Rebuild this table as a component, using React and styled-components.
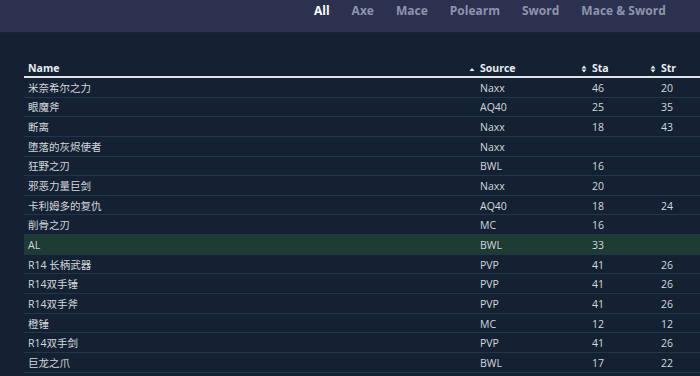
import React from "react";
import styled, { createGlobalStyle } from "styled-components";

const GlobalStyle = createGlobalStyle`
  html, body {
    margin: 0;
    padding: 0;
    background: #142132;
    font-family: "Open Sans", "Noto Sans", "Noto Sans CJK SC", sans-serif;
  }
`;

const tabs = ["All", "Axe", "Mace", "Polearm", "Sword", "Mace & Sword"];

const rows = [
  ["米奈希尔之力", "Naxx", "46", "20"],
  ["眼魔斧", "AQ40", "25", "35"],
  ["断离", "Naxx", "18", "43"],
  ["堕落的灰烬使者", "Naxx", "", ""],
  ["狂野之刃", "BWL", "16", ""],
  ["邪恶力量巨剑", "Naxx", "20", ""],
  ["卡利姆多的复仇", "AQ40", "18", "24"],
  ["削骨之刃", "MC", "16", ""],
  ["AL", "BWL", "33", "", true],
  ["R14 长柄武器", "PVP", "41", "26"],
  ["R14双手锤", "PVP", "41", "26"],
  ["R14双手斧", "PVP", "41", "26"],
  ["橙锤", "MC", "12", "12"],
  ["R14双手剑", "PVP", "41", "26"],
  ["巨龙之爪", "BWL", "17", "22"],
];

const Page = styled.div`
  width: 700px;
  height: 376px;
  overflow: hidden;
`;

const TopBar = styled.nav`
  height: 32px;
  background: #2c3150;
  border-bottom: 2px solid #1a2438;
  display: flex;
  align-items: flex-start;
  padding-left: 314px;
  gap: 22px;
`;

const Tab = styled.span`
  font-size: 12px;
  font-weight: 700;
  line-height: 22px;
  color: ${(p) => (p.active ? "#ffffff" : "#8f94ad")};
  white-space: nowrap;
`;

const Content = styled.div`
  padding: 26px 0 0 24px;
  overflow: hidden;
`;

const Table = styled.table`
  border-collapse: collapse;
  table-layout: fixed;
  width: 703px;
  font-size: 10.5px;
  color: #d3d8de;
`;

const Th = styled.th`
  text-align: left;
  font-weight: 700;
  color: #e8ecf0;
  height: 16px;
  padding: 0 0 0 ${(p) => (p.first ? "4px" : "14px")};
  border-bottom: 2px solid #dfe3e8;
  white-space: nowrap;
`;

const SortIcon = styled.svg`
  width: 6px;
  height: 8px;
  margin: 0 5px 0 -11px;
  vertical-align: -1px;
`;

const Tr = styled.tr`
  background: ${(p) => (p.hl ? "#1e3b34" : "transparent")};
`;

const Td = styled.td`
  height: 17.65px;
  line-height: 14px;
  padding: 1px 0 0 ${(p) => (p.first ? "4px" : "14px")};
  border-bottom: 1px solid #24344a;
  white-space: nowrap;
  overflow: hidden;
`;

const Up = () => (
  <SortIcon viewBox="0 0 6 8">
    <path d="M0.5 6 L3 3 L5.5 6 Z" fill="#e8ecf0" />
  </SortIcon>
);

const Both = () => (
  <SortIcon viewBox="0 0 6 8">
    <path d="M0.5 3.4 L3 0.6 L5.5 3.4 Z M0.5 4.6 L3 7.4 L5.5 4.6 Z" fill="#e8ecf0" />
  </SortIcon>
);

export default function App() {
  return (
    <Page>
      <GlobalStyle />
      <TopBar>
        {tabs.map((t, i) => (
          <Tab key={t} active={i === 0}>
            {t}
          </Tab>
        ))}
      </TopBar>
      <Content>
        <Table>
          <colgroup>
            <col style={{ width: 442 }} />
            <col style={{ width: 112 }} />
            <col style={{ width: 69 }} />
            <col style={{ width: 80 }} />
          </colgroup>
          <thead>
            <tr>
              <Th first>Name</Th>
              <Th>
                <Up />
                Source
              </Th>
              <Th>
                <Both />
                Sta
              </Th>
              <Th>
                <Both />
                Str
              </Th>
            </tr>
          </thead>
          <tbody>
            {rows.map((r, i) => (
              <Tr key={i} hl={r[4]}>
                <Td first>{r[0]}</Td>
                <Td>{r[1]}</Td>
                <Td>{r[2]}</Td>
                <Td>{r[3]}</Td>
              </Tr>
            ))}
          </tbody>
        </Table>
      </Content>
    </Page>
  );
}
